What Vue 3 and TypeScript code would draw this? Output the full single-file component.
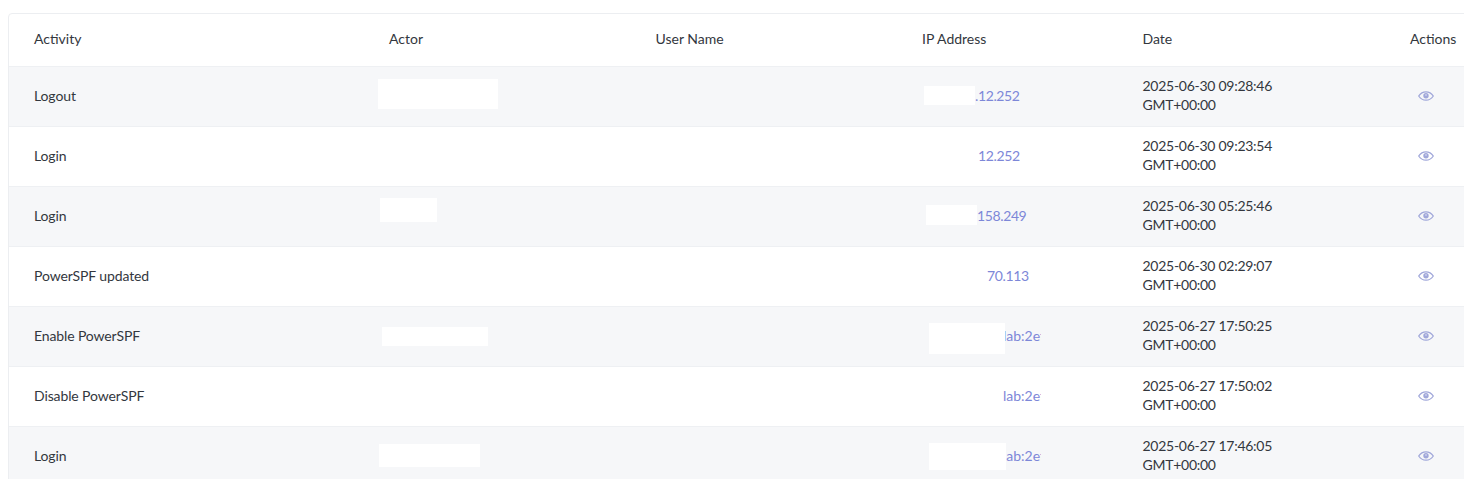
<script setup lang="ts">
interface Mask { left: number; top: number; width: number; height: number }
interface Row {
  activity: string
  actorMask?: Mask
  ipMask?: Mask
  ip: string
  ipOffset: number
  date: string
}
const columns = ['Activity', 'Actor', 'User Name', 'IP Address', 'Date', 'Actions']
const rows: Row[] = [
  { activity: 'Logout', actorMask: { left: -11, top: 12, width: 120, height: 30 }, ipMask: { left: 2, top: 19, width: 51, height: 19 }, ip: '.12.252', ipOffset: 53, date: '2025-06-30 09:28:46' },
  { activity: 'Login', ip: '12.252', ipOffset: 56, date: '2025-06-30 09:23:54' },
  { activity: 'Login', actorMask: { left: -9, top: 11, width: 57, height: 24 }, ipMask: { left: 4, top: 18, width: 51, height: 20 }, ip: '158.249', ipOffset: 55, date: '2025-06-30 05:25:46' },
  { activity: 'PowerSPF updated', ip: '70.113', ipOffset: 65, date: '2025-06-30 02:29:07' },
  { activity: 'Enable PowerSPF', actorMask: { left: -7, top: 20, width: 106, height: 19 }, ipMask: { left: 7, top: 16, width: 76, height: 31 }, ip: 'lab:2ef', ipOffset: 81, date: '2025-06-27 17:50:25' },
  { activity: 'Disable PowerSPF', ip: 'lab:2ef', ipOffset: 81, date: '2025-06-27 17:50:02' },
  { activity: 'Login', actorMask: { left: -10, top: 17, width: 101, height: 23 }, ipMask: { left: 7, top: 16, width: 77, height: 27 }, ip: 'lab:2ef', ipOffset: 81, date: '2025-06-27 17:46:05' },
]
const isHex = (ip: string): boolean => ip.includes(':')
</script>

<template>
  <div class="page">
    <section class="card">
      <div class="row head">
        <div v-for="c in columns" :key="c" class="cell">{{ c }}</div>
      </div>
      <div v-for="(r, i) in rows" :key="i" class="row body" :class="{ odd: i % 2 === 0 }">
        <div class="cell text">{{ r.activity }}</div>
        <div class="cell">
          <span
            v-if="r.actorMask"
            class="mask"
            :style="{ left: r.actorMask.left + 'px', top: r.actorMask.top + 'px', width: r.actorMask.width + 'px', height: r.actorMask.height + 'px' }"
          ></span>
        </div>
        <div class="cell"></div>
        <div class="cell">
          <div class="ip-clip">
            <a class="ip" :class="{ hex: isHex(r.ip) }" :style="{ paddingLeft: r.ipOffset + 'px' }">{{ r.ip }}</a>
          </div>
          <span
            v-if="r.ipMask"
            class="mask"
            :style="{ left: r.ipMask.left + 'px', top: r.ipMask.top + 'px', width: r.ipMask.width + 'px', height: r.ipMask.height + 'px' }"
          ></span>
        </div>
        <div class="cell date">
          <div>{{ r.date }}</div>
          <div>GMT+00:00</div>
        </div>
        <div class="cell action">
          <svg class="eye" viewBox="0 0 16 10" width="16" height="10" fill="none" aria-label="View">
            <path d="M.7 5C2.500 2.300 5 .8 8 .8s5.500 1.500 7.300 4.200C13.500 7.700 11 9.200 8 9.200S2.500 7.700.7 5Z" stroke="currentColor" stroke-width="1.300" />
            <circle cx="8" cy="4.800" r="2.700" fill="currentColor" />
            <circle cx="8" cy="4" r=".8" fill="#fff" fill-opacity=".7" />
          </svg>
        </div>
      </div>
    </section>
  </div>
</template>

<style>
html, body { margin: 0; overflow: hidden; background: #fff; }
</style>

<style scoped>
.page {
  height: 479px;
  overflow: hidden;
  padding: 13px 0 0 8px;
  box-sizing: border-box;
  font-family: Lato, "Open Sans", sans-serif;
  font-size: 14px;
  color: #33373e;
}
.card {
  width: 1480px;
  border: 1px solid #eceef1;
  border-radius: 4px;
  background: #fff;
}
.row {
  display: grid;
  grid-template-columns: 355px 266.5px 266.500px 220.500px 267.500px 104px;
  padding-left: 25px;
  align-items: center;
  box-sizing: border-box;
}
.head { height: 52px; }
.head .cell { padding-bottom: 4px; }
.body { height: 60px; border-top: 1px solid #eef0f3; }
.odd { background: #f6f7f9; }
.cell { position: relative; align-self: stretch; box-sizing: border-box; display: flex; flex-direction: column; justify-content: center; line-height: 19px; padding-bottom: 2px; }
.text { letter-spacing: -0.12px; }
.mask { position: absolute; background: #fff; }
.ip-clip { width: 119px; overflow: hidden; white-space: nowrap; }
.ip { color: #7d87d8; letter-spacing: -0.38px; }
.ip.hex { letter-spacing: 0; }
.date { letter-spacing: -0.27px; padding-bottom: 4px; }
.action { align-items: flex-start; padding-left: 8px; padding-bottom: 1px; }
.eye { color: #a0a7da; }
</style>
